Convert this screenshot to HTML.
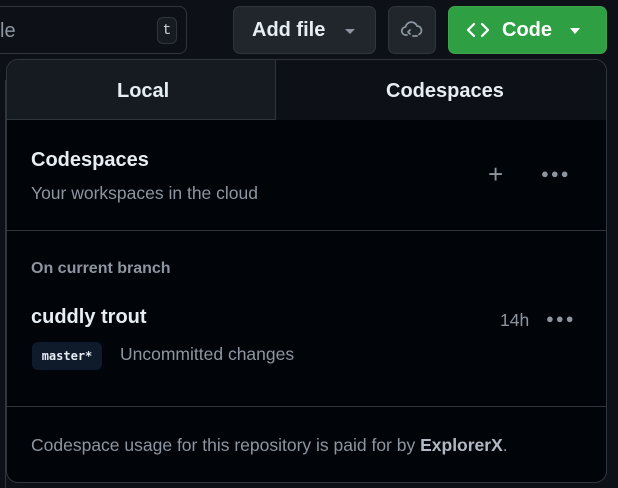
<!DOCTYPE html>
<html><head><style>
*{box-sizing:border-box;margin:0;padding:0}
body{width:618px;height:488px;background:#0d1117;font-family:"Liberation Sans",sans-serif;position:relative;overflow:hidden;color:#e6edf3}
.abs{position:absolute}
.search{left:-10px;top:6px;width:197px;height:48px;border:1px solid #30363d;border-radius:8px;background:#0d1117}
.btn{border:1px solid #30363d;border-radius:7px;background:#21262d;}
.pop{left:6px;top:59px;width:601px;height:424px;border:1px solid #30363d;border-radius:12px;background:#010409;overflow:hidden}
.t{font-size:20px;font-weight:bold}
.m{color:#8d96a0;font-size:17.5px}
.dots{font-size:13px;color:#8d96a0;letter-spacing:2px}
</style></head><body>
<div class="abs search"></div>
<div class="abs" style="left:0;top:20px;font-size:20px;color:#8d96a0">le</div>
<div class="abs" style="left:157px;top:17px;width:20px;height:27px;border:1px solid #30363d;border-radius:6px;background:#161b22;font-family:'Liberation Mono',monospace;font-size:15px;color:#c9d1d9;text-align:center;line-height:25px">t</div>
<div class="abs btn" style="left:233px;top:6px;width:143px;height:48px"></div>
<div class="abs" style="left:252px;top:19px;font-size:20px;font-weight:bold;color:#e6edf3">Add file</div>
<div class="abs" style="left:345px;top:29px;border-left:5px solid transparent;border-right:5px solid transparent;border-top:5px solid #8d96a0"></div>
<div class="abs btn" style="left:388px;top:6px;width:48px;height:48px"></div>
<svg class="abs" style="left:400px;top:18px" width="24" height="24" viewBox="0 0 24 24" fill="none" stroke="#8d96a0" stroke-width="1.8" stroke-linecap="round" stroke-linejoin="round"><path d="M7 17H6a4 4 0 0 1-.5-8A6 6 0 0 1 17 8a4.5 4.5 0 0 1 2 8.5"/><path d="M10 12l-2 2 2 2M13 18h4"/></svg>
<div class="abs" style="left:448px;top:6px;width:159px;height:48px;border-radius:7px;background:#2ea043;border:1px solid #3fa34d"></div>
<svg class="abs" style="left:466px;top:20px" width="24" height="20" viewBox="0 0 24 20" fill="none" stroke="#fff" stroke-width="2.2" stroke-linecap="round" stroke-linejoin="round"><path d="M8 4L2 10l6 6M16 4l6 6-6 6"/></svg>
<div class="abs" style="left:502px;top:19px;font-size:20px;font-weight:bold;color:#fff">Code</div>
<div class="abs" style="left:570px;top:28px;border-left:5px solid transparent;border-right:5px solid transparent;border-top:6px solid #fff"></div>
<div class="abs" style="left:0;top:80px;width:6px;height:408px;border-right:1px solid #30363d"></div>
<div class="abs pop">
 <div class="abs" style="left:0;top:0;width:269px;height:60px;background:#161b22;border-bottom:1px solid #30363d;border-right:1px solid #30363d"></div>
 <div class="abs" style="left:269px;top:0;width:332px;height:60px;background:#0d1117"></div>
 <div class="abs" style="left:110px;top:20px;font-size:20px;font-weight:bold">Local</div>
 <div class="abs" style="left:379px;top:20px;font-size:20px;font-weight:bold">Codespaces</div>
 <div class="abs t" style="left:24px;top:89px">Codespaces</div>
 <div class="abs m" style="left:24px;top:123px">Your workspaces in the cloud</div>
 <div class="abs" style="left:481px;top:100px;font-size:26px;color:#8d96a0;line-height:28px">+</div>
 <div class="abs dots" style="left:534px;top:106px">●●●</div>
 <div class="abs" style="left:0;top:170px;width:601px;height:1px;background:#30363d"></div>
 <div class="abs" style="left:24px;top:200px;font-size:16px;font-weight:bold;color:#8d96a0">On current branch</div>
 <div class="abs t" style="left:24px;top:246px">cuddly trout</div>
 <div class="abs m" style="left:493px;top:250px">14h</div>
 <div class="abs dots" style="left:539px;top:251px">●●●</div>
 <div class="abs" style="left:25px;top:282px;width:70px;height:28px;background:#0f1a2b;border-radius:6px;font-family:'DejaVu Sans Mono',monospace;font-weight:bold;font-size:12px;color:#e6edf3;text-align:center;line-height:28px">master*</div>
 <div class="abs m" style="left:113px;top:284px">Uncommitted changes</div>
 <div class="abs" style="left:0;top:346px;width:601px;height:1px;background:#30363d"></div>
 <div class="abs m" style="left:24px;top:375px">Codespace usage for this repository is paid for by <b style="color:#b1bac4">ExplorerX</b>.</div>
</div>
</body></html>
